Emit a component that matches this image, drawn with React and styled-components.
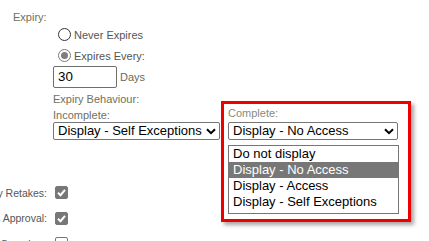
import React from "react";
import styled, { createGlobalStyle } from "styled-components";

const Global = createGlobalStyle`
  html, body { margin: 0; padding: 0; background: #fff; }
  body {
    font-family: "Liberation Sans", Arial, sans-serif;
    overflow: hidden;
  }
`;

const Page = styled.div`
  padding-top: 11px;
  width: 429px;
  height: 241px;
  box-sizing: border-box;
  overflow: hidden;
`;

const FieldLabel = styled.div`
  font-size: 11px;
  line-height: 13px;
  color: ${(p) => p.$tone || "#707060"};
  padding-left: ${(p) => p.$indent || 0}px;
  margin-top: ${(p) => p.$top || 0}px;
  margin-bottom: ${(p) => p.$bottom || 0}px;
  white-space: nowrap;
`;

const Indent = styled.div`
  margin-left: 53px;
`;

const RadioRow = styled.div`
  display: flex;
  align-items: center;
  height: 21px;
  padding-left: 5px;
  gap: 3px;
`;

const RadioCircle = styled.span`
  position: relative;
  width: 13px;
  height: 13px;
  box-sizing: border-box;
  border-radius: 50%;
  border: 1px solid ${(p) => (p.$checked ? "#7a7a7a" : "#333")};
  background: #fff;
  flex: none;
  &::after {
    content: "";
    display: ${(p) => (p.$checked ? "block" : "none")};
    position: absolute;
    left: 2px;
    top: 2px;
    width: 7px;
    height: 7px;
    border-radius: 50%;
    background: #7e7e7e;
  }
`;

const RadioText = styled.span`
  font-size: 11px;
  color: #555;
`;

const InputRow = styled.div`
  display: flex;
  align-items: center;
  gap: 3px;
`;

const TextInput = styled.div`
  width: 64px;
  height: 22px;
  box-sizing: border-box;
  border: 1px solid #6e6e6e;
  border-radius: 2px;
  padding: 0 4px;
  font-size: 13.33px;
  line-height: 20px;
  color: #000;
`;

const Unit = styled.span`
  font-size: 11px;
  color: #6a6a5e;
`;

const SelectRow = styled.div`
  display: flex;
  align-items: flex-end;
  gap: 8px;
  margin-top: 1px;
`;

const Column = styled.div`
  position: relative;
  display: flex;
  flex-direction: column;
`;

const SelectBox = styled.div`
  width: ${(p) => p.$width}px;
  height: 18px;
  box-sizing: border-box;
  border: 1px solid #767676;
  border-radius: 2px;
  display: flex;
  align-items: center;
  justify-content: space-between;
  padding: 0 3px 0 4px;
  font-size: 13px;
  line-height: 16px;
  color: #000;
  white-space: nowrap;
  background: #fff;
  svg { flex: none; }
`;

const Frame = styled.div`
  position: absolute;
  left: -7px;
  top: -6px;
  width: 190px;
  height: 121px;
  box-sizing: border-box;
  border: 3px solid #ee0000;
  box-shadow: 3px 3px 4px rgba(0, 0, 0, 0.35);
  pointer-events: none;
`;

const ListBox = styled.div`
  position: absolute;
  left: 0;
  top: 38px;
  width: 171px;
  box-sizing: border-box;
  border: 1px solid #767676;
  background: #fff;
  padding-bottom: 3px;
  z-index: 2;
`;

const Option = styled.div`
  height: 16px;
  line-height: 16px;
  padding: 0 4px;
  font-size: 13px;
  white-space: nowrap;
  color: ${(p) => (p.$active ? "#fff" : "#000")};
  background: ${(p) => (p.$active ? "#777" : "transparent")};
`;

const CheckList = styled.div`
  display: flex;
  flex-direction: column;
  margin-top: 40px;
`;

const CheckRow = styled.div`
  display: flex;
  align-items: center;
  gap: 8px;
  height: 25.5px;
`;

const CheckLabel = styled.div`
  width: 47px;
  display: flex;
  justify-content: flex-end;
  white-space: nowrap;
  font-size: 10.5px;
  color: #555;
`;

const Checkbox = styled.span`
  width: 13px;
  height: 13px;
  box-sizing: border-box;
  border-radius: 2px;
  border: 1px solid ${(p) => (p.$checked ? "#777" : "#767676")};
  background: ${(p) => (p.$checked ? "#777" : "#fff")};
  display: flex;
  align-items: center;
  justify-content: center;
  flex: none;
`;

const Chevron = () => (
  <svg width="10" height="7" viewBox="0 0 10 7">
    <path d="M1 1.2 L5 5.2 L9 1.2" fill="none" stroke="#000" strokeWidth="2" />
  </svg>
);

const Tick = () => (
  <svg width="11" height="11" viewBox="0 0 11 11">
    <path d="M2 5.8 L4.5 8.2 L9 2.8" fill="none" stroke="#fff" strokeWidth="2" />
  </svg>
);

const options = [
  "Do not display",
  "Display - No Access",
  "Display - Access",
  "Display - Self Exceptions",
];

const checks = [
  { label: "Apply Retakes:", checked: true },
  { label: "Requires Approval:", checked: true },
  { label: "Show Overview:", checked: false },
];

export default function App() {
  return (
    <>
      <Global />
      <Page>
        <FieldLabel $indent={13}>Expiry:</FieldLabel>
        <Indent>
          <RadioRow>
            <RadioCircle />
            <RadioText>Never Expires</RadioText>
          </RadioRow>
          <RadioRow>
            <RadioCircle $checked />
            <RadioText>Expires Every:</RadioText>
          </RadioRow>
          <InputRow>
            <TextInput>30</TextInput>
            <Unit>Days</Unit>
          </InputRow>
          <FieldLabel $top={5}>Expiry Behaviour:</FieldLabel>
          <SelectRow>
            <Column>
              <FieldLabel>Incomplete:</FieldLabel>
              <SelectBox $width={167}>
                <span>Display - Self Exceptions</span>
                <Chevron />
              </SelectBox>
            </Column>
            <Column>
              <FieldLabel $tone="#8a8a7c" $bottom={2}>Complete:</FieldLabel>
              <SelectBox $width={170}>
                <span>Display - No Access</span>
                <Chevron />
              </SelectBox>
              <ListBox>
                {options.map((o) => (
                  <Option key={o} $active={o === "Display - No Access"}>
                    {o}
                  </Option>
                ))}
              </ListBox>
              <Frame />
            </Column>
          </SelectRow>
        </Indent>
        <CheckList>
          {checks.map((c) => (
            <CheckRow key={c.label}>
              <CheckLabel>
                <span>{c.label}</span>
              </CheckLabel>
              <Checkbox $checked={c.checked}>{c.checked && <Tick />}</Checkbox>
            </CheckRow>
          ))}
        </CheckList>
      </Page>
    </>
  );
}
